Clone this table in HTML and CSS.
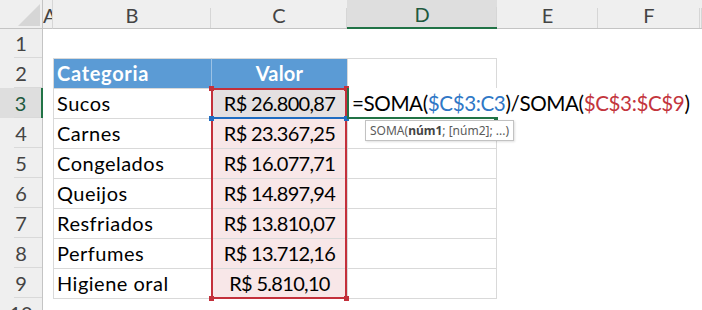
FILE: index.html
```html
<!DOCTYPE html>
<html lang="pt-BR">
<head>
    <meta charset="UTF-8">
    <meta name="viewport" content="width=device-width, initial-scale=1.0">
    <title>Vendas por categoria</title>
    <link rel="stylesheet" href="styles.css">
</head>
<body>
    <div class="sheet">
        <!-- column letters -->
        <div class="row head">
            <div class="corner"></div>
            <div class="col col-a">A</div>
            <div class="col">B</div>
            <div class="col">C</div>
            <div class="col on">D</div>
            <div class="col">E</div>
            <div class="col">F</div>
            <div class="col"></div>
        </div>

        <div class="row first">
            <div class="num">1</div>
        </div>

        <div class="row">
            <div class="num">2</div>
            <div class="cell"></div>
            <div class="cell grid title">Categoria</div>
            <div class="cell grid title money">Valor</div>
            <div class="cell grid last"></div>
        </div>

        <div class="row">
            <div class="num on">3</div>
            <div class="cell"></div>
            <div class="cell grid">Sucos</div>
            <div class="cell grid money current">
                R$ 26.800,87
                <span class="ref ref-red"><i class="knob tl"></i><i class="knob tr"></i><i class="knob bl"></i><i class="knob br"></i></span>
                <span class="ref ref-blue"><i class="knob bl"></i><i class="knob br"></i></span>
            </div>
            <div class="cell editing">
                <span class="formula">=SOMA(<span class="ref-a">$C$3:C3</span>)/SOMA(<span class="ref-b">$C$3:$C$9</span>)</span>
                <span class="edit-frame"><i class="knob br"></i></span>
                <span class="tip">SOMA(<b>núm1</b>; [núm2]; ...)</span>
            </div>
        </div>

        <div class="row">
            <div class="num">4</div>
            <div class="cell"></div>
            <div class="cell grid">Carnes</div>
            <div class="cell grid money range">R$ 23.367,25</div>
            <div class="cell grid last"></div>
        </div>

        <div class="row">
            <div class="num">5</div>
            <div class="cell"></div>
            <div class="cell grid">Congelados</div>
            <div class="cell grid money range">R$ 16.077,71</div>
            <div class="cell grid last"></div>
        </div>

        <div class="row">
            <div class="num">6</div>
            <div class="cell"></div>
            <div class="cell grid">Queijos</div>
            <div class="cell grid money range">R$ 14.897,94</div>
            <div class="cell grid last"></div>
        </div>

        <div class="row">
            <div class="num">7</div>
            <div class="cell"></div>
            <div class="cell grid">Resfriados</div>
            <div class="cell grid money range">R$ 13.810,07</div>
            <div class="cell grid last"></div>
        </div>

        <div class="row">
            <div class="num">8</div>
            <div class="cell"></div>
            <div class="cell grid">Perfumes</div>
            <div class="cell grid money range">R$ 13.712,16</div>
            <div class="cell grid last"></div>
        </div>

        <div class="row">
            <div class="num">9</div>
            <div class="cell"></div>
            <div class="cell grid">Higiene oral</div>
            <div class="cell grid money range">R$ 5.810,10</div>
            <div class="cell grid last"></div>
        </div>

        <div class="row">
            <div class="num">10</div>
            <div class="cell"></div>
            <div class="cell cap"></div>
            <div class="cell cap"></div>
            <div class="cell cap"></div>
        </div>
    </div>
</body>
</html>
```

FILE: styles.css
```css
body {
    margin: 0;
    background-color: white;
    font-family: Lato, 'Liberation Sans', sans-serif;
}
.sheet {
    width: 702px;
    height: 310px;
    overflow: hidden;
}
.row {
    display: grid;
    grid-template-columns: 43px 10px 158px 136px 150px 101px 102px 2px;
    height: 30px;
}
.row.head,
.row.first {
    height: 29px;
}

/* headers */
.corner {
    display: flex;
    justify-content: flex-end;
    align-items: flex-end;
    background-color: #efefef;
    border-right: 1px solid #c4c4c4;
    border-bottom: 1px solid #c4c4c4;
}
.corner::after {
    content: "";
    width: 22px;
    height: 22px;
    margin: 0 2px 2px 0;
    background-color: #d6d6d6;
    clip-path: polygon(100% 0, 100% 100%, 0 100%);
}
.col {
    box-sizing: border-box;
    display: flex;
    justify-content: center;
    align-items: flex-end;
    padding-bottom: 1px;
    background: linear-gradient(#d6d6d6, #d6d6d6) no-repeat right bottom / 1px 20px, #efefef;
    border-bottom: 1px solid #c4c4c4;
    font-size: 20px;
    line-height: 23px;
    color: #444;
}
.col-a {
    justify-content: flex-start;
    overflow: hidden;
    background: #efefef;
    border-right: 1px solid #d6d6d6;
}
.col.on {
    background-color: #dedede;
    border-bottom: 2px solid #217346;
    color: #1f5a3e;
}
.num {
    box-sizing: border-box;
    display: flex;
    justify-content: center;
    align-items: flex-end;
    padding-bottom: 3px;
    background: linear-gradient(#d9d9d9, #d9d9d9) no-repeat 14px 100% / 29px 1px, #efefef;
    border-right: 1px solid #c4c4c4;
    font-size: 20px;
    line-height: 23px;
    color: #444;
}
.num.on {
    background-color: #dedede;
    border-right: 2px solid #217346;
    color: #1f5a3e;
}

/* cells */
.cell {
    box-sizing: border-box;
    display: flex;
    align-items: flex-end;
    min-width: 0;
    padding: 0 3px 3px;
    font-size: 20px;
    line-height: 23px;
    letter-spacing: 0.5px;
    color: black;
    white-space: nowrap;
}
.grid {
    border-left: 1px solid #d9d9d9;
    border-top: 1px solid #d9d9d9;
}
.grid.last {
    border-right: 1px solid #d9d9d9;
}
.cap {
    border-top: 1px solid #d9d9d9;
}
.title {
    background-color: #5b9bd5;
    color: white;
    font-weight: bold;
    letter-spacing: 0.7px;
}
.money {
    justify-content: center;
    letter-spacing: -0.7px;
}
.title.money {
    border-left-color: #9cc2e5;
    letter-spacing: 0.2px;
}
.range {
    background-color: #f8e7e8;
}
.current {
    position: relative;
    background-color: #e4e0e1;
}

/* range references drawn over the cells */
.ref {
    position: absolute;
    box-sizing: border-box;
    pointer-events: none;
}
.ref-red {
    left: -1px;
    top: -1px;
    width: 136px;
    height: 211px;
    border: 2px solid #c3303b;
}
.ref-blue {
    left: -1px;
    top: -1px;
    width: 136px;
    height: 31px;
    border-bottom: 2px solid #1f6cc1;
}
.knob {
    position: absolute;
    width: 5px;
    height: 5px;
}
.ref-red .knob {
    background-color: #c3303b;
}
.ref-red .tl { left: -4px; top: -4px; }
.ref-red .tr { right: -4px; top: -4px; }
.ref-red .bl { left: -4px; bottom: -4px; }
.ref-red .br { right: -4px; bottom: -4px; }
.ref-blue .knob {
    background-color: #1f6cc1;
}
.ref-blue .bl { left: -2px; bottom: -4px; }
.ref-blue .br { right: -2px; bottom: -4px; }

/* cell being edited */
.editing {
    position: relative;
    padding-left: 5px;
    overflow: visible;
    letter-spacing: -0.4px;
}
.formula {
    font-size: 20.6px;
}
.ref-a {
    color: #2f77c6;
}
.ref-b {
    color: #c3353d;
}
.edit-frame {
    position: absolute;
    left: 0;
    top: 0;
    width: 150px;
    height: 31px;
    box-sizing: border-box;
    border-left: 2px solid #217346;
    border-bottom: 2px solid #217346;
}
.edit-frame .knob {
    right: -1px;
    bottom: -4px;
    width: 4px;
    height: 4px;
    background-color: #217346;
}
.tip {
    position: absolute;
    left: 18px;
    top: 32px;
    height: 21px;
    box-sizing: border-box;
    display: flex;
    align-items: center;
    padding: 0 4px;
    background-color: white;
    border: 1px solid #c2c2c2;
    box-shadow: 1px 1px 2px rgba(0, 0, 0, 0.12);
    font-family: 'Noto Sans', sans-serif;
    font-size: 12px;
    line-height: 1;
    letter-spacing: 0;
    color: #5b5b5b;
}
.tip b {
    color: #444;
}
```
